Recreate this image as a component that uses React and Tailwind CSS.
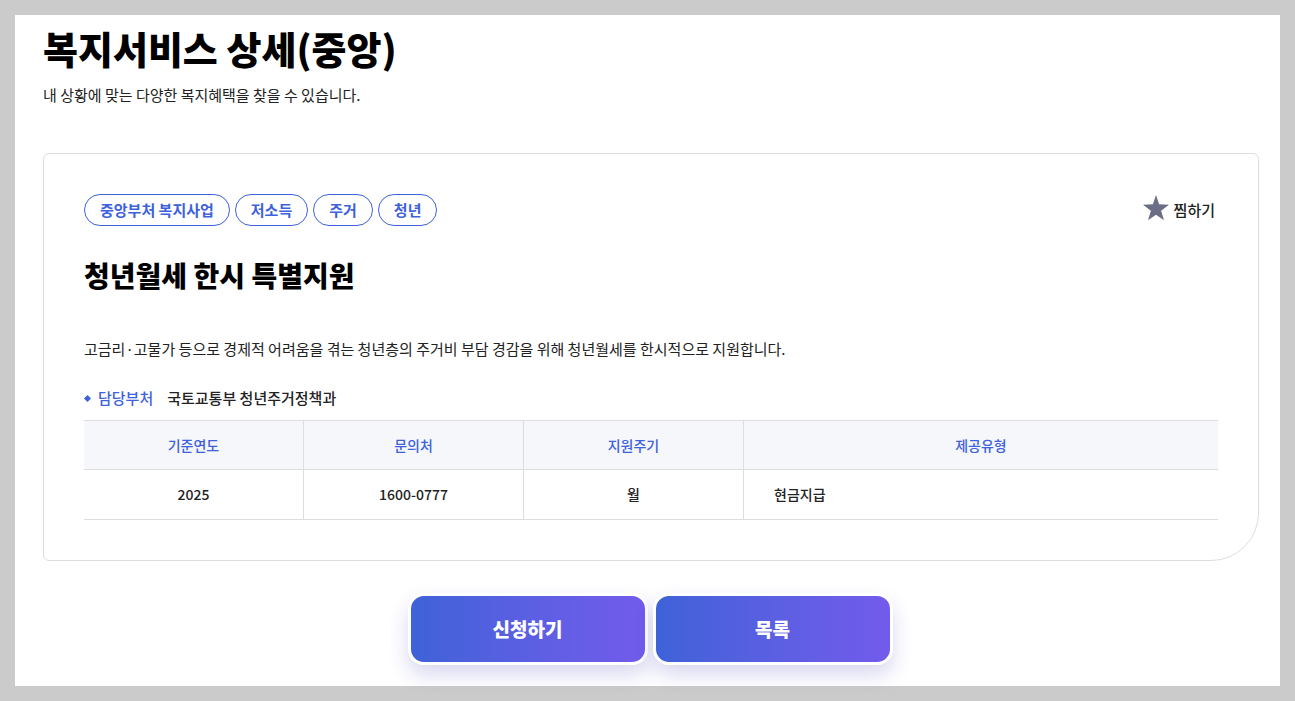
import React, { useState } from 'react';

const tags = ['중앙부처 복지사업', '저소득', '주거', '청년'];

const columns = [
  { label: '기준연도', value: '2025' },
  { label: '문의처', value: '1600-0777' },
  { label: '지원주기', value: '월' },
  { label: '제공유형', value: '현금지급', wide: true },
];

const StarIcon = () => (
  <svg className="w-[26px] h-[26px]" viewBox="0 0 26 26" fill="currentColor" aria-hidden>
    <path d="M13 0 L16.1 9.3 L26 9.7 L18.1 15.7 L21 25.3 L13 19.7 L5 25.3 L7.9 15.7 L0 9.7 L9.9 9.3 Z" />
  </svg>
);

function ActionButton({ children }) {
  return (
    <button
      type="button"
      className="w-60 h-[72px] rounded-2xl border-[3px] border-white bg-linear-to-r from-[#3d62d8] to-[#735bec] bg-origin-border text-white text-[19px] font-black shadow-[0_10px_20px_rgba(60,60,180,0.2)]"
    >
      {children}
    </button>
  );
}

function ServiceTable() {
  return (
    <table className="w-full mt-[10px] table-fixed border-separate border-spacing-0 border-t border-[#dddddd] text-sm leading-6 font-medium">
      <thead>
        <tr className="h-[49px] bg-[#f5f7fb] text-[#3e61dc]">
          {columns.map((col) => (
            <th
              key={col.label}
              scope="col"
              className={`p-0 border-b border-[#dddddd] font-medium ${col.wide ? '' : 'w-[220px] border-r'}`}
            >
              {col.label}
            </th>
          ))}
        </tr>
      </thead>
      <tbody>
        <tr className="h-[50px]">
          {columns.map((col) => (
            <td
              key={col.label}
              className={`pb-px border-b border-[#dddddd] ${col.wide ? 'pl-[30px] text-left' : 'border-r text-center'}`}
            >
              {col.value}
            </td>
          ))}
        </tr>
      </tbody>
    </table>
  );
}

const App = () => {
  const [saved, setSaved] = useState(false);

  return (
    <div className="min-h-screen bg-[#cbcbcb] p-[15px] font-['Noto_Sans_CJK_KR',sans-serif] text-[#222222]">
      <main className="bg-white pt-[7px] pr-[21px] pb-[21px] pl-7">
        <h1 className="text-[38px] leading-[52px] font-black text-black">복지서비스 상세(중앙)</h1>
        <p className="mt-[9px] text-[15px] leading-6">내 상황에 맞는 다양한 복지혜택을 찾을 수 있습니다.</p>

        <section className="mt-[46px] rounded-md rounded-br-[48px] border border-[#dddddd] p-10">
          <div className="flex h-8 items-center justify-between">
            <ul className="flex gap-[5px]">
              {tags.map((tag) => (
                <li
                  key={tag}
                  className="h-8 px-[15px] flex items-center rounded-full border border-[#3e61dc] text-[15px] font-bold text-[#3e61dc]"
                >
                  {tag}
                </li>
              ))}
            </ul>
            <button
              type="button"
              aria-pressed={saved}
              onClick={() => setSaved(!saved)}
              className="flex items-center gap-[5px] pr-[3px] text-[15px] leading-6 font-medium"
            >
              <span className={`pb-1 ${saved ? 'text-[#3e61dc]' : 'text-[#6c6d87]'}`}>
                <StarIcon />
              </span>
              찜하기
            </button>
          </div>

          <h2 className="mt-[29px] text-[28px] leading-10 font-black text-black">청년월세 한시 특별지원</h2>
          <p className="mt-[42px] text-[15px] leading-6">
            고금리·고물가 등으로 경제적 어려움을 겪는 청년층의 주거비 부담 경감을 위해 청년월세를 한시적으로 지원합니다.
          </p>

          <dl className="mt-[25px] flex items-center text-[15px] leading-6 font-medium">
            <dt className="flex items-center text-[#3e61dc]">
              <span className="ml-px mr-2 size-[5px] rotate-45 bg-[#3e61dc]" aria-hidden />
              담당부처
            </dt>
            <dd className="ml-[14px]">국토교통부 청년주거정책과</dd>
          </dl>

          <ServiceTable />
        </section>

        <div className="mt-8 flex justify-center gap-[5px] pr-0.5">
          <ActionButton>신청하기</ActionButton>
          <ActionButton>목록</ActionButton>
        </div>
      </main>
    </div>
  );
};

export default App;
